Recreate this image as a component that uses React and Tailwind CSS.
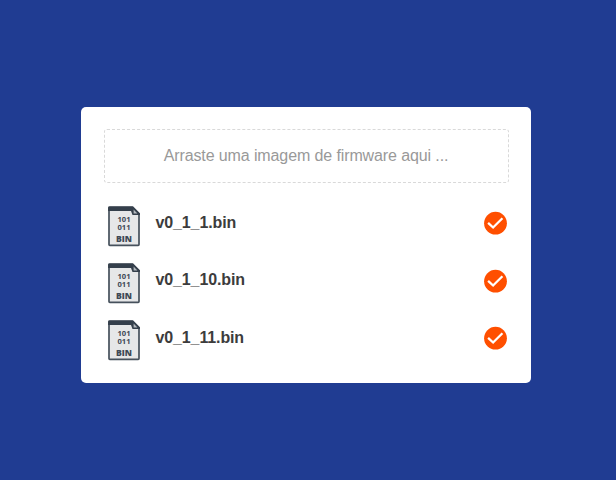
const files = ["v0_1_1.bin", "v0_1_10.bin", "v0_1_11.bin"];

function BinIcon() {
  return (
    <svg width="34" height="42" viewBox="0 0 34 42" className="block shrink-0">
      <path d="M3 1.5H25L32 8.5V38.5Q32 39.3 31.2 39.3H2.8Q2 39.3 2 38.5V2.5Q2 1.5 3 1.5Z" fill="#e6e7e8" stroke="#46515c" strokeWidth="1.7" />
      <path d="M1.1 1.5Q1.1 .2 2.5 .2H26L33 7.2V9H25.5L24 5H1.1Z" fill="#343f4b" />
      <path d="M26.6 3.6V7.4H30.4Z" fill="#b4babf" />
      <g fill="#3e4855" fontFamily="Open Sans, sans-serif" textAnchor="middle">
        <text x="17" y="16" fontSize="7.2" fontWeight="700" textLength="13" lengthAdjust="spacingAndGlyphs">101</text>
        <text x="17" y="24" fontSize="7.2" fontWeight="700" textLength="13" lengthAdjust="spacingAndGlyphs">011</text>
        <text x="17" y="35.7" fontSize="8.2" fontWeight="800" textLength="16" lengthAdjust="spacingAndGlyphs">BIN</text>
      </g>
    </svg>
  );
}

function CheckIcon() {
  return (
    <svg width="24" height="24" viewBox="0 0 24 24" className="block shrink-0">
      <circle cx="12.5" cy="12.2" r="11.4" fill="#ff4f00" />
      <path d="M5.1 11.8L10.1 16.5L19.4 7.3" fill="none" stroke="#fff" strokeWidth="2.3" />
    </svg>
  );
}

export default function App() {
  return (
    <main className="flex h-[480px] w-[616px] items-start justify-center bg-[#203c92] pt-[107px] pr-1 font-['Liberation_Sans',Arial,sans-serif]">
      <section className="h-[276px] w-[450px] rounded-[5px] bg-white pt-[22px] pr-[22px] pl-[23px]">
        <div className="flex h-[54px] items-center justify-center rounded-[3px] border border-dashed border-[#d9d9d9] pr-px text-base leading-6 tracking-[-0.11px] text-[#999999]">
          Arraste uma imagem de firmware aqui ...
        </div>
        <ul className="mt-[23px] flex flex-col gap-[15.2px]">
          {files.map((name) => (
            <li key={name} className="flex h-[42px] items-start pl-[3px]">
              <BinIcon />
              <span className="mt-[5.2px] ml-[14.5px] grow text-base leading-6 font-bold tracking-[-0.12px] text-[#3c3c3c]">{name}</span>
              <div className="mt-[5.4px] mr-[2px]">
                <CheckIcon />
              </div>
            </li>
          ))}
        </ul>
      </section>
    </main>
  );
}
